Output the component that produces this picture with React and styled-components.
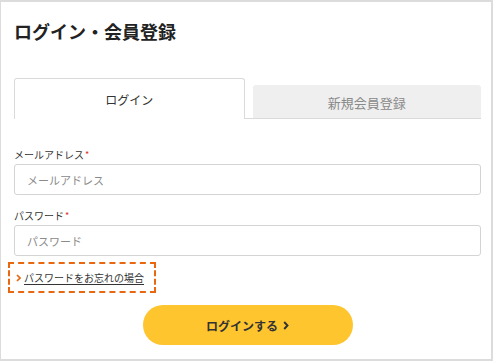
import React from "react";
import styled, { createGlobalStyle } from "styled-components";

const Global = createGlobalStyle`
  html, body { margin: 0; padding: 0; background: #fff; }
  body { font-family: "Noto Sans CJK JP", "Noto Sans", sans-serif; color: #333; }
  * { box-sizing: border-box; }
`;

const Frame = styled.div`
  width: 493px;
  height: 361px;
  border: 2px solid #dcdcdc;
  border-left-width: 1px;
  padding: 16px 10px 0 13px;
  display: flex;
  flex-direction: column;
`;

const Title = styled.h1`
  margin: 0;
  font-size: 18px;
  line-height: 27px;
  font-weight: 700;
  color: #222;
`;

const TabList = styled.div`
  margin-top: 33px;
  display: flex;
  align-items: flex-end;
  gap: 8px;
  border-bottom: 1px solid #dadada;
`;

const Tab = styled.div`
  flex: 1;
  display: flex;
  align-items: center;
  justify-content: center;
  border-radius: 3px 3px 0 0;
  height: ${(p) => (p.$active ? "41px" : "33px")};
  margin-bottom: ${(p) => (p.$active ? "-1px" : "0")};
  background: ${(p) => (p.$active ? "#fff" : "#efefef")};
  border: ${(p) => (p.$active ? "1px solid #dadada" : "none")};
  border-bottom: none;
  color: ${(p) => (p.$active ? "#333" : "#8a8a8a")};
  font-size: ${(p) => (p.$active ? "12px" : "13px")};
  padding-top: ${(p) => (p.$active ? "0" : "1px")};
`;

const Field = styled.div`
  display: flex;
  flex-direction: column;
  gap: 2px;
  margin-top: ${(p) => p.$top}px;
`;

const Label = styled.label`
  font-size: 10px;
  line-height: 15px;
  color: #333;
  display: flex;
  align-items: flex-start;
`;

const Required = styled.span`
  color: #e0302c;
  font-size: 9px;
  line-height: 13px;
  margin-left: 1px;
  padding-top: 1px;
`;

const Input = styled.input`
  height: 31px;
  width: 100%;
  border: 1px solid #d4d4d4;
  border-radius: 3px;
  padding: 0 12px;
  font-family: inherit;
  font-size: 11px;
  color: #333;
  outline: none;
  &::placeholder { color: #8a8a8a; }
`;

const ForgotLink = styled.a`
  align-self: flex-start;
  margin-top: 6px;
  margin-left: -6px;
  display: inline-flex;
  align-items: center;
  gap: 3px;
  padding: 6px 10px 6px 6px;
  border: 2px dashed #e8670f;
  font-size: 10px;
  line-height: 15px;
  color: #333;
  text-decoration: underline;
  text-underline-offset: 2px;
  cursor: pointer;
`;

const Chevron = styled.svg`
  flex: none;
  display: block;
`;

const Actions = styled.div`
  display: flex;
  justify-content: center;
  margin-top: 12px;
`;

const Button = styled.button`
  width: 210px;
  height: 40px;
  border: none;
  border-radius: 20px;
  background: #fec52f;
  color: #333;
  font-family: inherit;
  font-size: 12px;
  font-weight: 600;
  display: flex;
  align-items: center;
  justify-content: center;
  gap: 5px;
  cursor: pointer;
`;

export default function App() {
  return (
    <>
      <Global />
      <Frame>
        <Title>ログイン・会員登録</Title>
        <TabList>
          <Tab $active>ログイン</Tab>
          <Tab>新規会員登録</Tab>
        </TabList>
        <Field $top={28}>
          <Label>
            メールアドレス<Required>*</Required>
          </Label>
          <Input placeholder="メールアドレス" />
        </Field>
        <Field $top={13}>
          <Label>
            パスワード<Required>*</Required>
          </Label>
          <Input type="password" placeholder="パスワード" />
        </Field>
        <ForgotLink>
          <Chevron width="5" height="8" viewBox="0 0 5 8">
            <path d="M1 1 L4 4 L1 7" fill="none" stroke="#e8670f" strokeWidth="1.7" />
          </Chevron>
          パスワードをお忘れの場合
        </ForgotLink>
        <Actions>
          <Button>
            ログインする
            <Chevron width="6" height="9" viewBox="0 0 6 9">
              <path d="M1.2 1 L4.5 4.5 L1.2 8" fill="none" stroke="#333" strokeWidth="1.9" />
            </Chevron>
          </Button>
        </Actions>
      </Frame>
    </>
  );
}
